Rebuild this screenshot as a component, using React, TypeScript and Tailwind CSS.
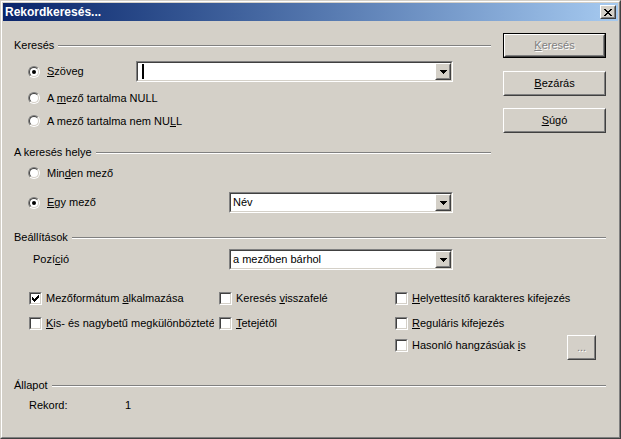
import React from 'react';

const Radio = ({ checked }: { checked?: boolean }) => (
    <div className="w-[12px] h-[12px] shrink-0 rounded-full border border-t-[#808080] border-l-[#808080] border-r-white border-b-white">
        <div className="w-full h-full rounded-full border border-t-[#404040] border-l-[#404040] border-r-[#d4d0c8] border-b-[#d4d0c8] bg-white flex items-center justify-center">
            {checked && <div className="w-[4px] h-[4px] rounded-full bg-black" />}
        </div>
    </div>
);

const Check = ({ checked }: { checked?: boolean }) => (
    <div className="w-[13px] h-[13px] shrink-0 border border-t-[#808080] border-l-[#808080] border-r-white border-b-white">
        <div className="w-full h-full border border-t-[#404040] border-l-[#404040] border-r-[#d4d0c8] border-b-[#d4d0c8] bg-white flex items-center justify-center">
            {checked && (
                <svg width="7" height="7" viewBox="0 0 7 7" shapeRendering="crispEdges">
                    <rect x="6" y="0" width="1" height="3" fill="#000" />
                    <rect x="5" y="1" width="1" height="3" fill="#000" />
                    <rect x="4" y="2" width="1" height="3" fill="#000" />
                    <rect x="3" y="3" width="1" height="3" fill="#000" />
                    <rect x="2" y="4" width="1" height="3" fill="#000" />
                    <rect x="1" y="3" width="1" height="3" fill="#000" />
                    <rect x="0" y="2" width="1" height="3" fill="#000" />
                </svg>
            )}
        </div>
    </div>
);

const Raised = ({ children, className = '' }: { children?: React.ReactNode; className?: string }) => (
    <div className={`border border-t-white border-l-white border-r-[#404040] border-b-[#404040] ${className}`}>
        <div className="w-full h-full border border-t-[#d4d0c8] border-l-[#d4d0c8] border-r-[#808080] border-b-[#808080] flex items-center justify-center bg-[#d4d0c8]">
            {children}
        </div>
    </div>
);

const Combo = ({ text, width, cursor }: { text?: string; width: string; cursor?: boolean }) => (
    <div className={`${width} h-[21px] flex border border-t-[#808080] border-l-[#808080] border-r-white border-b-white`}>
        <div className="flex-1 flex border border-t-[#404040] border-l-[#404040] border-r-[#d4d0c8] border-b-[#d4d0c8] bg-white">
            <div className="flex-1 flex items-center pl-[2px] whitespace-nowrap">
                {cursor && <div className="w-[2px] h-[15px] bg-black ml-[2px]" />}
                {text}
            </div>
            <Raised className="w-[16px] h-full">
                <svg width="7" height="4" viewBox="0 0 7 4" shapeRendering="crispEdges">
                    <polygon points="0,0 7,0 4,4 3,4" fill="#000" />
                </svg>
            </Raised>
        </div>
    </div>
);

const GroupLabel = ({ children, className = '' }: { children: React.ReactNode; className?: string }) => (
    <div className={`h-[13px] flex items-center ${className}`}>
        <span className="whitespace-nowrap">{children}</span>
        <div className="flex-1 ml-[4px] h-0 border-t border-b border-t-[#808080] border-b-white" />
    </div>
);

const Btn = ({ children, isDefault, disabled }: { children: React.ReactNode; isDefault?: boolean; disabled?: boolean }) => {
    const inner = (
        <Raised className="w-full h-full">
            <span className={disabled ? 'text-[#808080] [text-shadow:1px_1px_0_#fff]' : ''}>{children}</span>
        </Raised>
    );
    return isDefault
        ? <div className="w-[103px] h-[25px] border border-black">{inner}</div>
        : <div className="w-[103px] h-[25px]">{inner}</div>;
};

export default function App() {
    return (
        <div className="w-[621px] h-[439px] font-['Liberation_Sans',Arial,sans-serif] text-[11px] leading-[13px] text-black border border-t-[#d4d0c8] border-l-[#d4d0c8] border-r-[#404040] border-b-[#404040]">
            <div className="w-full h-full flex flex-col border border-t-white border-l-white border-r-[#808080] border-b-[#808080] bg-[#d4d0c8] p-px">
                {/* title bar */}
                <div className="h-[18px] shrink-0 flex items-center bg-linear-to-r from-[#0a246a] to-[#a6caf0] pl-[2px] pr-[2px]">
                    <span className="text-white font-bold text-[12px] leading-[14px]">Rekordkeresés...</span>
                    <Raised className="ml-auto w-[16px] h-[14px]">
                        <svg width="8" height="7" viewBox="0 0 8 7" shapeRendering="crispEdges">
                            <path d="M0 0h2v1h-2zM6 0h2v1h-2zM1 1h2v1h-2zM5 1h2v1h-2zM2 2h4v1h-4zM3 3h2v1h-2zM2 4h4v1h-4zM1 5h2v1h-2zM5 5h2v1h-2zM0 6h2v1h-2zM6 6h2v1h-2z" fill="#000" />
                        </svg>
                    </Raised>
                </div>

                <div className="flex-1 pl-[11px] pr-[12px]">
                    {/* top section */}
                    <div className="flex mt-[12px]">
                        <div className="w-[477px]">
                            <GroupLabel className="mt-[6px]">Keresés</GroupLabel>
                            <div className="mt-[9px] h-[21px] flex items-center">
                                <div className="w-[122px] flex items-center pl-[14px]">
                                    <Radio checked />
                                    <span className="ml-[7px]"><u>S</u>zöveg</span>
                                </div>
                                <Combo width="w-[317px]" cursor />
                            </div>
                            <div className="mt-[9px] h-[14px] flex items-center pl-[14px]">
                                <Radio />
                                <span className="ml-[7px]">A <u>m</u>ező tartalma NULL</span>
                            </div>
                            <div className="mt-[9px] h-[14px] flex items-center pl-[14px]">
                                <Radio />
                                <span className="ml-[7px]">A mező tartalma nem NU<u>L</u>L</span>
                            </div>

                            <GroupLabel className="mt-[18px]">A keresés helye</GroupLabel>
                            <div className="mt-[7px] h-[14px] flex items-center pl-[14px]">
                                <Radio />
                                <span className="ml-[7px]">Min<u>d</u>en mező</span>
                            </div>
                            <div className="mt-[12px] h-[21px] flex items-center">
                                <div className="w-[215px] flex items-center pl-[14px]">
                                    <Radio checked />
                                    <span className="ml-[7px]"><u>E</u>gy mező</span>
                                </div>
                                <Combo width="w-[224px]" text="Név" />
                            </div>
                        </div>

                        <div className="ml-[12px] w-[103px] flex flex-col">
                            <Btn isDefault disabled><u>K</u>eresés</Btn>
                            <div className="mt-[13px]"><Btn><u>B</u>ezárás</Btn></div>
                            <div className="mt-[12px]"><Btn><u>S</u>úgó</Btn></div>
                        </div>
                    </div>

                    {/* Beállítások */}
                    <GroupLabel className="mt-[18px]">Beállítások</GroupLabel>
                    <div className="mt-[5px] h-[21px] flex items-center">
                        <div className="w-[215px] pl-[19px]">Pozí<u>c</u>ió</div>
                        <Combo width="w-[224px]" text="a mezőben bárhol" />
                    </div>

                    <div className="mt-[22px] h-[13px] flex items-center">
                        <div className="w-[205px] pl-[15px] flex items-center">
                            <Check checked />
                            <span className="ml-[4px] whitespace-nowrap">Mezőformátum <u>a</u>lkalmazása</span>
                        </div>
                        <div className="w-[176px] flex items-center">
                            <Check />
                            <span className="ml-[4px] whitespace-nowrap">Keresés <u>v</u>isszafelé</span>
                        </div>
                        <div className="flex items-center">
                            <Check />
                            <span className="ml-[4px] whitespace-nowrap"><u>H</u>elyettesítő karakteres kifejezés</span>
                        </div>
                    </div>

                    <div className="mt-[12px] h-[13px] flex items-center">
                        <div className="w-[205px] pl-[15px] flex items-center">
                            <Check />
                            <span className="ml-[4px] w-[168px] overflow-hidden whitespace-nowrap"><u>K</u>is- és nagybetű megkülönböztetés</span>
                        </div>
                        <div className="w-[176px] flex items-center">
                            <Check />
                            <span className="ml-[4px] whitespace-nowrap"><u>T</u>etejétől</span>
                        </div>
                        <div className="flex items-center">
                            <Check />
                            <span className="ml-[4px] whitespace-nowrap"><u>R</u>eguláris kifejezés</span>
                        </div>
                    </div>

                    <div className="mt-[5px] h-[25px] flex items-start">
                        <div className="w-[381px]" />
                        <div className="w-[201px] flex items-start">
                            <div className="mt-[4px] flex items-center">
                                <Check />
                                <span className="ml-[4px] whitespace-nowrap">Hasonló hangzásúak <u>i</u>s</span>
                            </div>
                            <div className="ml-auto w-[29px] h-[25px]">
                                <Raised className="w-full h-full">
                                    <span className="text-[#808080] [text-shadow:1px_1px_0_#fff]">...</span>
                                </Raised>
                            </div>
                        </div>
                    </div>

                    {/* Állapot */}
                    <GroupLabel className="mt-[19px]">Állapot</GroupLabel>
                    <div className="mt-[6px] h-[14px] flex items-center pl-[15px]">
                        <span className="w-[96px]">Rekord:</span>
                        <span>1</span>
                    </div>
                </div>
            </div>
        </div>
    );
}
